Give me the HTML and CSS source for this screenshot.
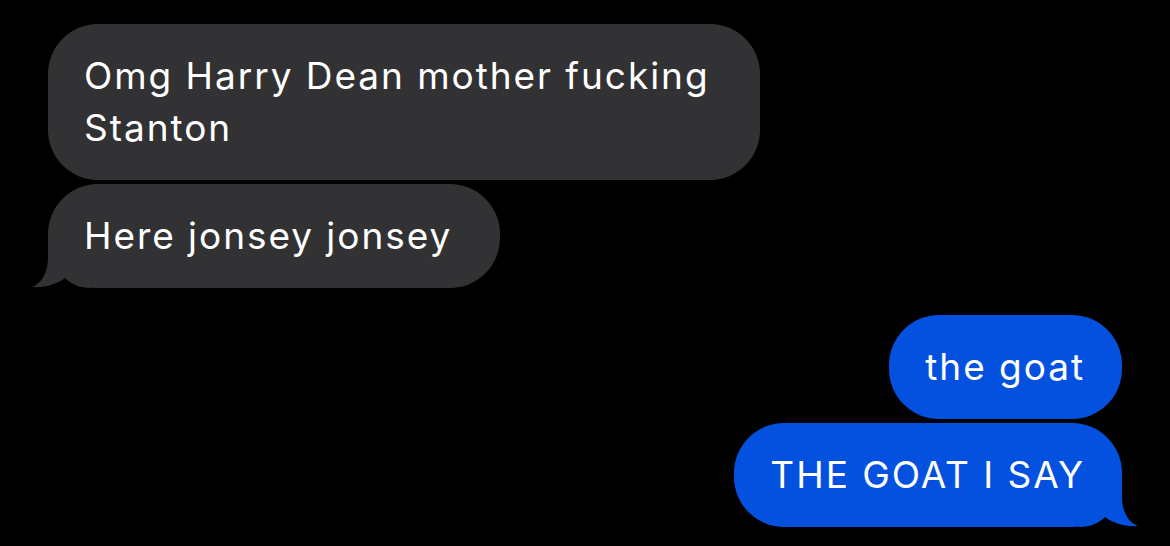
FILE: index.html
```html
<!DOCTYPE html>
<html lang="en">
<head>
    <meta charset="UTF-8">
    <meta name="viewport" content="width=device-width, initial-scale=1.0">
    <title>Messages</title>
    <link rel="stylesheet" href="styles.css">
</head>
<body>
    <div class="thread">
        <!-- received -->
        <div class="group group-in">
            <div class="bubble bubble-in">Omg Harry Dean mother fucking Stanton</div>
            <div class="bubble bubble-in has-tail loose">
                Here jonsey jonsey
                <svg class="tail" viewBox="0 0 60 50" width="60" height="50">
                    <path d="M17 0 L17 20 C17 35 10 46 1 49 C14 50 26 46 34 40 C40 46 48 50 60 50 L60 0 Z"/>
                </svg>
            </div>
        </div>

        <!-- sent -->
        <div class="group group-out">
            <div class="bubble bubble-out">the goat</div>
            <div class="bubble bubble-out has-tail">
                THE GOAT I SAY
                <svg class="tail" viewBox="0 0 60 50" width="60" height="50">
                    <path d="M17 0 L17 20 C17 35 10 46 1 49 C14 50 26 46 34 40 C40 46 48 50 60 50 L60 0 Z"/>
                </svg>
            </div>
        </div>
    </div>
</body>
</html>
```

FILE: styles.css
```css
* {
    margin: 0;
    padding: 0;
    box-sizing: border-box;
}

body {
    background: #000;
    font-family: Inter, 'Noto Sans', sans-serif;
    color: #fff;
    height: 546px;
    overflow: hidden;
}

.thread {
    display: flex;
    flex-direction: column;
    gap: 27px;
    padding: 24px 48px 0;
}

.group {
    display: flex;
    flex-direction: column;
    gap: 4px;
}

.group-in { align-items: flex-start; }
.group-out { align-items: flex-end; }

.bubble {
    position: relative;
    isolation: isolate;
    max-width: 712px;
    padding: 26px 37px 26px 36px;
    border-radius: 50px;
    font-size: 37px;
    line-height: 52px;
    letter-spacing: 1.95px;
}

.bubble.loose {
    padding-right: 48px;
}

.bubble-in {
    background: #323234;
}

.bubble-out {
    background: #0451df;
}

.tail {
    position: absolute;
    bottom: 0;
    z-index: -1;
    display: block;
}

.bubble-in .tail {
    left: -17px;
    fill: #323234;
}

.bubble-out .tail {
    right: -17px;
    fill: #0451df;
    transform: scaleX(-1);
}
```
